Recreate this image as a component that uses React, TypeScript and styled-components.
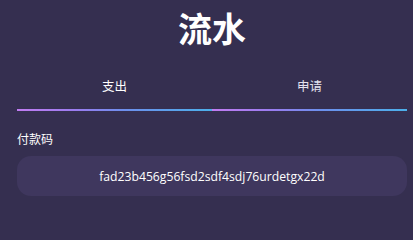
import React from "react";
import styled, { createGlobalStyle } from "styled-components";

const GlobalStyle = createGlobalStyle`
  html, body {
    margin: 0;
    padding: 0;
    background: #352f50;
  }
  body {
    font-family: "Noto Sans", "Noto Sans CJK SC", sans-serif;
    color: #ffffff;
  }
`;

const Page = styled.div`
  padding: 0 6px 0 17px;
  height: 205px;
  box-sizing: border-box;
  overflow: hidden;
`;

const Title = styled.h1`
  margin: 0;
  padding-top: 6px;
  text-align: center;
  font-family: "Noto Sans CJK SC", sans-serif;
  font-size: 34px;
  font-weight: 700;
  line-height: 44px;
`;

const Tabs = styled.div`
  display: flex;
  margin-top: 27px;
`;

const Tab = styled.div<{ $active?: boolean }>`
  flex: 1;
  text-align: center;
  font-family: "Noto Sans CJK SC", sans-serif;
  font-size: 12.5px;
  line-height: 18px;
  color: ${(p) => (p.$active ? "#ffffff" : "#e4e2ee")};
  padding-bottom: 14px;
  border-bottom: 2px solid transparent;
  border-image: linear-gradient(90deg, #c27cf2 0%, #9b7cf0 30%, #6d8fec 55%, #4cb0ea 100%) 1;
  cursor: pointer;
`;

const Label = styled.div`
  margin-top: 19px;
  font-family: "Noto Sans CJK SC", sans-serif;
  font-size: 12px;
  line-height: 17px;
`;

const CodeBox = styled.div`
  margin-top: 9px;
  height: 40px;
  border-radius: 14px;
  background: #3f375e;
  display: flex;
  align-items: center;
  justify-content: center;
  font-family: "Open Sans", "Noto Sans", sans-serif;
  font-size: 12.2px;
`;

export default function App() {
  return (
    <>
      <GlobalStyle />
      <Page>
        <Title>流水</Title>
        <Tabs>
          <Tab $active>支出</Tab>
          <Tab>申请</Tab>
        </Tabs>
        <Label>付款码</Label>
        <CodeBox>fad23b456g56fsd2sdf4sdj76urdetgx22d</CodeBox>
      </Page>
    </>
  );
}
